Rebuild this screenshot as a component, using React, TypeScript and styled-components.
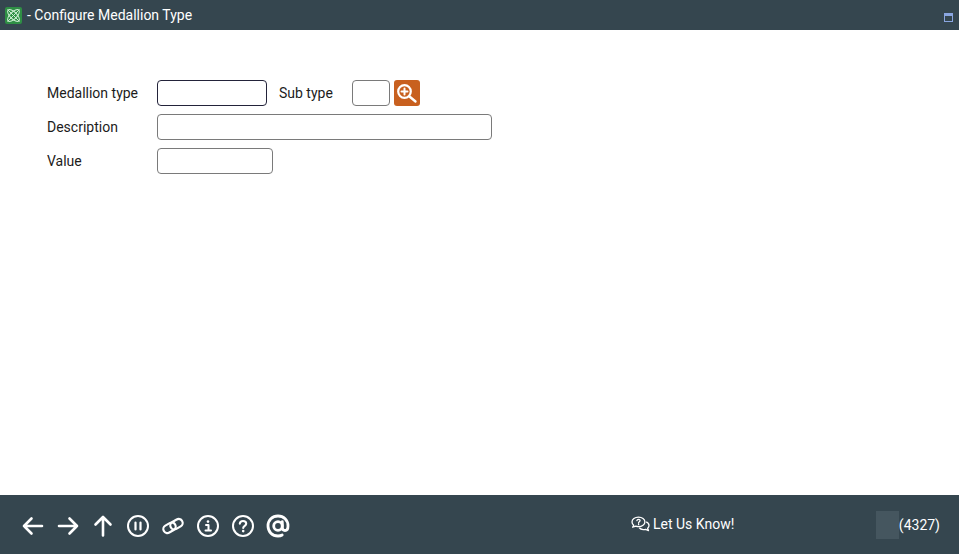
import React from 'react';
import styled, { createGlobalStyle } from 'styled-components';

const GlobalStyle = createGlobalStyle`
  html, body {
    margin: 0;
    padding: 0;
    height: 100%;
    background: #fff;
    font-family: Roboto, "Liberation Sans", sans-serif;
  }
  #root {
    height: 100%;
  }
`;

const Page = styled.div`
  display: flex;
  flex-direction: column;
  height: 554px;
  overflow: hidden;
`;

const TitleBar = styled.header`
  display: flex;
  align-items: center;
  height: 30px;
  padding: 0 6px 0 5px;
  background-color: #35464f;
  color: #fff;
  font-size: 14px;
`;

const TitleText = styled.span`
  margin-left: 5px;
  margin-top: -1px;
  flex: 1;
`;

const WindowButton = styled.span`
  width: 9px;
  height: 9px;
  margin-top: 4px;
  box-sizing: border-box;
  border: 1px solid #8aa6e0;
  border-top-width: 3px;
`;

const Content = styled.main`
  flex: 1;
  padding: 50px 47px 0;
`;

const Form = styled.form`
  display: flex;
  flex-direction: column;
  gap: 8px;
`;

const Row = styled.div`
  display: flex;
  align-items: center;
  height: 26px;
`;

const Label = styled.label<{ $width: number }>`
  width: ${p => p.$width}px;
  flex: none;
  font-size: 14px;
  color: #1c1c1c;
  margin-top: -1px;
`;

const Input = styled.input<{ $width: number; $active?: boolean }>`
  box-sizing: border-box;
  width: ${p => p.$width}px;
  height: 26px;
  padding: 0 4px;
  background: #fff;
  border: 1px solid ${p => (p.$active ? '#23233a' : '#7a7a7a')};
  border-radius: 4px;
  outline: none;
`;

const SubLabel = styled(Label)`
  margin-left: 12px;
`;

const LookupButton = styled.button`
  display: flex;
  width: 26px;
  height: 26px;
  margin-left: 4px;
  padding: 0;
  border: none;
  border-radius: 3px;
  background-color: #c8601f;
  color: #fff;
`;

const Footer = styled.footer`
  display: flex;
  align-items: center;
  height: 59px;
  padding: 0 19px 0 21px;
  background-color: #35464f;
  color: #fff;
  font-size: 14px;
`;

const IconRow = styled.nav`
  display: flex;
  align-items: center;
  gap: 11px;
  margin-top: 3px;
`;

const FooterIcon = styled.svg.attrs({ width: 24, height: 24, viewBox: '0 0 24 24', fill: 'none', stroke: '#fff' })`
  display: block;
  flex: none;
  stroke-linecap: round;
  stroke-linejoin: round;
`;

const Feedback = styled.div`
  display: flex;
  align-items: center;
  gap: 3px;
  margin-left: 341px;
  margin-top: -1px;
`;

const Status = styled.div`
  display: flex;
  align-items: center;
  margin-left: auto;
  margin-top: 1px;
`;

const StatusBox = styled.span`
  width: 23px;
  height: 28px;
  background-color: #45565f;
`;

const AppLogo = () => (
  <svg width="17" height="17" viewBox="0 0 17 17">
    <rect width="17" height="17" rx="2" fill="#2f8f45" />
    <g fill="none" stroke="#cfeed5" strokeWidth="1">
      <path d="M2.5 2.5 L14.5 14.5 M14.5 2.5 L2.5 14.5" />
      <ellipse cx="8.5" cy="8.5" rx="7.6" ry="3.4" transform="rotate(45 8.5 8.5)" />
      <ellipse cx="8.5" cy="8.5" rx="7.6" ry="3.4" transform="rotate(-45 8.5 8.5)" />
    </g>
  </svg>
);

const LookupIcon = () => (
  <svg width="26" height="26" viewBox="0 0 26 26" fill="none" stroke="#fff" strokeLinecap="round">
    <circle cx="10.5" cy="11.5" r="6.3" strokeWidth="2.2" />
    <path d="M15.5 16.5 L21.5 21.5" strokeWidth="2.4" />
    <path d="M10.5 8.5 V14.5 M7.5 11.5 H13.5" strokeWidth="2" />
  </svg>
);

const ChatIcon = () => (
  <svg width="19" height="17" viewBox="0 0 19 17" fill="none" stroke="#fff" strokeWidth="1.3" strokeLinejoin="round">
    <path d="M7.5 1.2 C3.8 1.2 1 3.3 1 6 C1 7.3 1.7 8.4 2.7 9.2 L1.6 11.2 L4.8 10.2 C5.6 10.5 6.6 10.7 7.5 10.7 C11.1 10.7 13.9 8.6 13.9 6 C13.9 3.3 11.1 1.2 7.5 1.2 Z" />
    <path d="M15.2 5.8 C16.9 6.5 18 7.8 18 9.4 C18 10.5 17.4 11.5 16.6 12.2 L17.5 14.6 L14.6 13.4 C13.8 13.6 13 13.7 12.2 13.6 C10.5 13.5 9.1 12.8 8.2 11.8" />
    <path d="M5.9 4.6 C6 3.7 6.7 3.3 7.5 3.3 C8.4 3.3 9.1 3.8 9.1 4.6 C9.1 5.6 7.6 5.7 7.6 6.8 M7.6 8 L7.6 8.7" strokeLinecap="round" />
  </svg>
);

const App: React.FC = () => {
  return (
    <Page>
      <GlobalStyle />
      <TitleBar>
        <AppLogo />
        <TitleText>- Configure Medallion Type</TitleText>
        <WindowButton />
      </TitleBar>
      <Content>
        <Form>
          <Row>
            <Label $width={110}>Medallion type</Label>
            <Input $width={110} $active />
            <SubLabel $width={73}>Sub type</SubLabel>
            <Input $width={38} />
            <LookupButton type="button">
              <LookupIcon />
            </LookupButton>
          </Row>
          <Row>
            <Label $width={110}>Description</Label>
            <Input $width={335} />
          </Row>
          <Row>
            <Label $width={110}>Value</Label>
            <Input $width={116} />
          </Row>
        </Form>
      </Content>
      <Footer>
        <IconRow>
          <FooterIcon strokeWidth={2.6}>
            <path d="M3 12 H21 M10.5 4.5 L3 12 L10.5 19.5" />
          </FooterIcon>
          <FooterIcon strokeWidth={2.6}>
            <path d="M3 12 H21 M13.5 4.5 L21 12 L13.5 19.5" />
          </FooterIcon>
          <FooterIcon strokeWidth={2.6}>
            <path d="M12 21.5 V3 M4.5 10.5 L12 3 L19.5 10.5" />
          </FooterIcon>
          <FooterIcon strokeWidth={2}>
            <circle cx="12" cy="12" r="10" />
            <path d="M9.5 8.5 V15.5 M14.5 8.5 V15.5" strokeWidth={2.2} />
          </FooterIcon>
          <FooterIcon strokeWidth={2.2}>
            <rect x="2" y="9.8" width="13" height="8" rx="4" transform="rotate(-30 8.5 13.8)" />
            <rect x="9" y="6.2" width="13" height="8" rx="4" transform="rotate(-30 15.5 10.2)" />
          </FooterIcon>
          <FooterIcon strokeWidth={2}>
            <circle cx="12" cy="12" r="10" />
            <path d="M10 11 H12.5 V16.5 M9.5 16.5 H15" strokeWidth={2} />
            <path d="M12 7.5 V7.6" strokeWidth={2.6} />
          </FooterIcon>
          <FooterIcon strokeWidth={2}>
            <circle cx="12" cy="12" r="10" />
            <path d="M8.8 9.6 C9 7.8 10.4 7 12 7 C13.8 7 15.2 8 15.2 9.7 C15.2 11.8 12.2 11.8 12.2 14" strokeWidth={2.1} />
            <path d="M12.2 17 V17.1" strokeWidth={2.6} />
          </FooterIcon>
          <FooterIcon strokeWidth={2.8}>
            <circle cx="12" cy="12" r="4.3" />
            <path d="M16.3 7.7 V13.5 C16.3 15.5 17.5 16.5 19 16.5 C20.7 16.5 22 15 22 12 C22 6.3 17.7 2 12 2 C6.3 2 2 6.3 2 12 C2 17.7 6.3 22 12 22 C13.6 22 15 21.7 16.2 21" />
          </FooterIcon>
        </IconRow>
        <Feedback>
          <ChatIcon />
          <span>Let Us Know!</span>
        </Feedback>
        <Status>
          <StatusBox />
          <span>(4327)</span>
        </Status>
      </Footer>
    </Page>
  );
};

export default App;
